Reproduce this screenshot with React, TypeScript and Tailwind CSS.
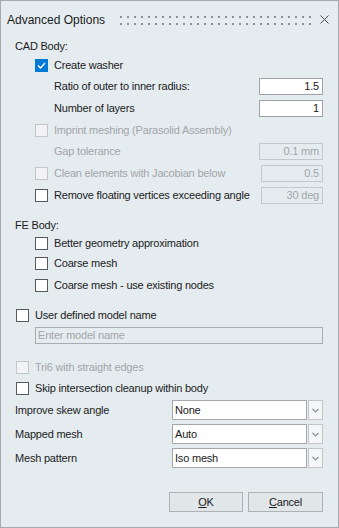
import React from "react";

type CBProps = { checked?: boolean; disabled?: boolean };

function CheckBox({ checked, disabled }: CBProps) {
  if (checked) {
    return (
      <div className="w-[13px] h-[13px] bg-[#0078d7] flex items-center justify-center shrink-0">
        <svg width="11" height="11" viewBox="0 0 11 11">
          <path d="M2 5.5 L4.5 8 L9 3" fill="none" stroke="#ffffff" strokeWidth="1.4" />
        </svg>
      </div>
    );
  }
  return (
    <div
      className={
        disabled
          ? "w-[13px] h-[13px] bg-[#f1f3f4] border border-[#c4c7c9] shrink-0"
          : "w-[13px] h-[13px] bg-white border border-[#555a5e] shrink-0"
      }
    />
  );
}

function CheckRow({
  label,
  checked,
  disabled,
  h,
}: {
  label: string;
  checked?: boolean;
  disabled?: boolean;
  h: string;
}) {
  return (
    <div className={`flex items-center gap-[6px] ${h}`}>
      <CheckBox checked={checked} disabled={disabled} />
      <span className={disabled ? "text-[#a2a5a8]" : "text-[#1b1b1b]"}>{label}</span>
    </div>
  );
}

function NumInput({ value, disabled, w }: { value: string; disabled?: boolean; w: string }) {
  return (
    <div
      className={
        disabled
          ? `${w} h-[17px] border border-[#c4c8cb] bg-[#e5ecf0] text-[#a2a5a8] flex items-center justify-end pr-[3px]`
          : `${w} h-[17px] border border-[#9da2a6] bg-white text-[#1b1b1b] flex items-center justify-end pr-[3px]`
      }
    >
      {value}
    </div>
  );
}

function Select({ value }: { value: string }) {
  return (
    <div className="flex h-[20px]">
      <div className="w-[135px] h-[20px] bg-white border border-[#a4a8ac] flex items-center pl-[2px] text-[#1b1b1b]">
        {value}
      </div>
      <div className="w-[15px] h-[20px] ml-[1px] bg-[#f4f6f7] border border-[#c2c6c9] flex items-center justify-center">
        <svg width="7" height="5" viewBox="0 0 7 5">
          <path d="M0.5 1 L3.5 4 L6.5 1" fill="none" stroke="#8a8e92" strokeWidth="1.2" />
        </svg>
      </div>
    </div>
  );
}

export default function App() {
  const dots: React.ReactNode[] = [];
  for (let i = 0; i < 28; i++) {
    dots.push(<rect key={`a${i}`} x={i * 7} y={1} width={2} height={2} fill="#8c9195" />);
    dots.push(<rect key={`b${i}`} x={i * 7} y={8} width={2} height={2} fill="#8c9195" />);
  }
  return (
    <div className="w-[339px] h-[528px] bg-[#e5ecf0] border border-[#a5abaf] flex flex-col font-['Liberation_Sans',Arial,sans-serif] text-[11px] text-[#1b1b1b] leading-none">
      {/* Title bar */}
      <div className="flex items-center h-[37px] pl-[6px]">
        <span className="w-[113px] text-[12px] text-[#1b1b1b]">Advanced Options</span>
        <svg width="191" height="10" viewBox="0 0 191 10">
          {dots}
        </svg>
        <svg width="9" height="9" viewBox="0 0 9 9" className="ml-[9px]">
          <path d="M0.5 0.5 L8.5 8.5 M8.5 0.5 L0.5 8.5" stroke="#4a4e52" strokeWidth="1" />
        </svg>
      </div>

      <div className="flex flex-col pl-[14px] pr-[15px] tracking-[-0.2px]">
        <div className="h-[16px] flex items-center">CAD Body:</div>
        <div className="pl-[20px] flex flex-col">
          <CheckRow label="Create washer" checked h="h-[22px]" />
          <div className="h-[21px] flex items-center justify-between pl-[19px]">
            <span>Ratio of outer to inner radius:</span>
            <NumInput value="1.5" w="w-[64px]" />
          </div>
          <div className="h-[22px] flex items-center justify-between pl-[19px]">
            <span>Number of layers</span>
            <NumInput value="1" w="w-[64px]" />
          </div>
          <CheckRow label="Imprint meshing (Parasolid Assembly)" disabled h="h-[22px]" />
          <div className="h-[21px] flex items-center justify-between pl-[19px]">
            <span className="text-[#a2a5a8]">Gap tolerance</span>
            <NumInput value="0.1 mm" disabled w="w-[64px]" />
          </div>
          <div className="h-[22px] flex items-center justify-between">
            <div className="flex items-center gap-[6px]">
              <CheckBox disabled />
              <span className="text-[#a2a5a8]">Clean elements with Jacobian below</span>
            </div>
            <NumInput value="0.5" disabled w="w-[62px]" />
          </div>
          <div className="h-[22px] flex items-center justify-between">
            <div className="flex items-center gap-[6px]">
              <CheckBox />
              <span>Remove floating vertices exceeding angle</span>
            </div>
            <NumInput value="30 deg" disabled w="w-[62px]" />
          </div>
        </div>

        <div className="h-[18px] mt-[10px] flex items-center">FE Body:</div>
        <div className="pl-[20px] flex flex-col">
          <CheckRow label="Better geometry approximation" h="h-[19px]" />
          <CheckRow label="Coarse mesh" h="h-[21px]" />
          <CheckRow label="Coarse mesh - use existing nodes" h="h-[22px]" />
        </div>

        <div className="mt-[8px] pl-[1px]">
          <CheckRow label="User defined model name" h="h-[22px]" />
        </div>
        <div className="ml-[20px] mt-[1px] h-[17px] border border-[#a9adb1] flex items-center pl-[2px] text-[#a2a5a8]">
          Enter model name
        </div>

        <div className="mt-[12px] pl-[1px] flex flex-col">
          <CheckRow label="Tri6 with straight edges" disabled h="h-[22px]" />
          <CheckRow label="Skip intersection cleanup within body" h="h-[20px]" />
        </div>

        <div className="flex flex-col">
          <div className="h-[24px] flex items-center justify-between">
            <span>Improve skew angle</span>
            <Select value="None" />
          </div>
          <div className="h-[24px] flex items-center justify-between">
            <span>Mapped mesh</span>
            <Select value="Auto" />
          </div>
          <div className="h-[24px] flex items-center justify-between">
            <span>Mesh pattern</span>
            <Select value="Iso mesh" />
          </div>
        </div>

        <div className="mt-[22px] flex justify-end gap-[5px]">
          <div className="w-[74px] h-[20px] border border-[#adb1b4] bg-[#e1e6e9] flex items-center justify-center">
            <span>
              <span className="underline">O</span>K
            </span>
          </div>
          <div className="w-[75px] h-[20px] border border-[#adb1b4] bg-[#e1e6e9] flex items-center justify-center">
            <span>
              <span className="underline">C</span>ancel
            </span>
          </div>
        </div>
      </div>
    </div>
  );
}
